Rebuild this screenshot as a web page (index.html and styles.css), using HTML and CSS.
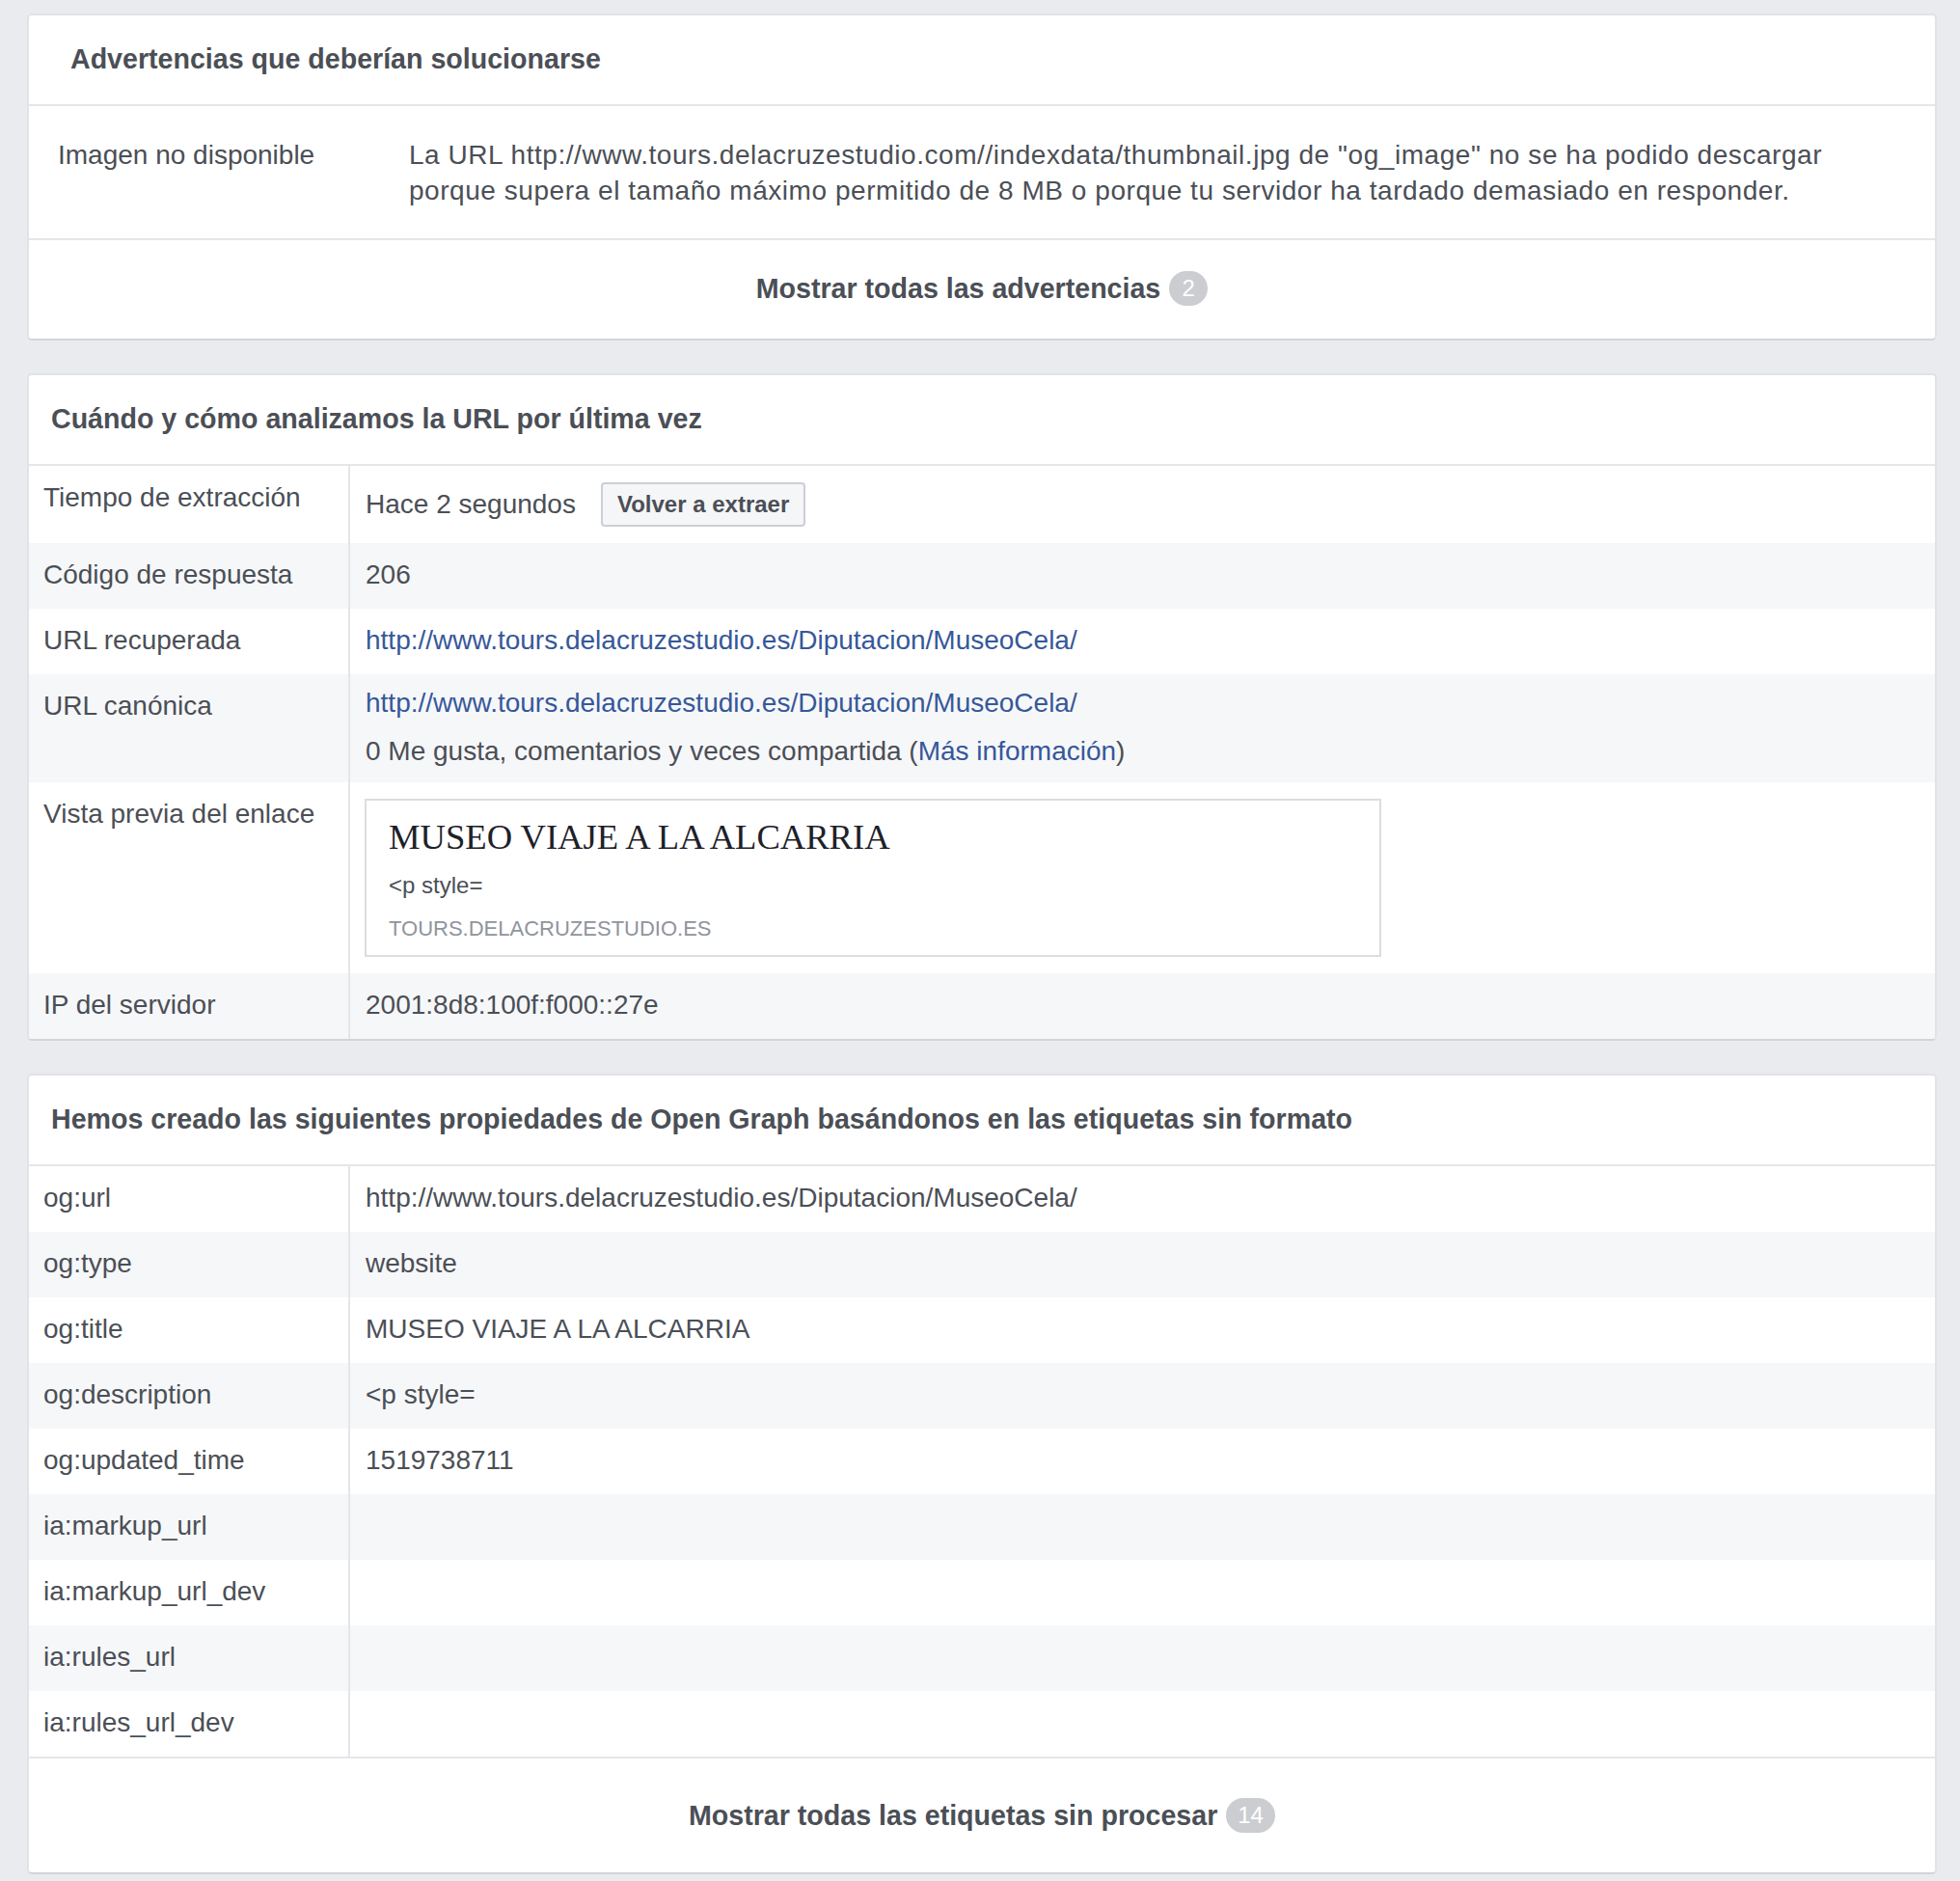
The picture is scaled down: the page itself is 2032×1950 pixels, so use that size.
FILE: index.html
```html
<!DOCTYPE html>
<html lang="es">
<head>
<meta charset="utf-8">
<title>Depurador de contenido compartido</title>
<link rel="stylesheet" href="styles.css">
</head>
<body>
<main class="page">

  <section class="card">
    <h2 class="card-head card-head-wide">Advertencias que deberían solucionarse</h2>
    <div class="warn-row">
      <div class="warn-label">Imagen no disponible</div>
      <div class="warn-text">La URL http://www.tours.delacruzestudio.com//indexdata/thumbnail.jpg de "og_image" no se ha podido descargar<br>porque supera el tamaño máximo permitido de 8 MB o porque tu servidor ha tardado demasiado en responder.</div>
    </div>
    <div class="card-foot foot-short">
      <span class="foot-text">Mostrar todas las advertencias</span><span class="badge">2</span>
    </div>
  </section>

  <section class="card">
    <h2 class="card-head">Cuándo y cómo analizamos la URL por última vez</h2>
    <div class="rows">
      <div class="row">
        <div class="cell-label">Tiempo de extracción</div>
        <div class="cell-value value-action">
          <span>Hace 2 segundos</span>
          <button class="btn" type="button">Volver a extraer</button>
        </div>
      </div>
      <div class="row alt">
        <div class="cell-label">Código de respuesta</div>
        <div class="cell-value">206</div>
      </div>
      <div class="row">
        <div class="cell-label">URL recuperada</div>
        <div class="cell-value"><a class="link" href="#">http://www.tours.delacruzestudio.es/Diputacion/MuseoCela/</a></div>
      </div>
      <div class="row alt">
        <div class="cell-label">URL canónica</div>
        <div class="cell-value value-stack">
          <div><a class="link" href="#">http://www.tours.delacruzestudio.es/Diputacion/MuseoCela/</a></div>
          <div class="stack-second">0 Me gusta, comentarios y veces compartida (<a class="link" href="#">Más información</a>)</div>
        </div>
      </div>
      <div class="row">
        <div class="cell-label">Vista previa del enlace</div>
        <div class="cell-value value-preview">
          <div class="preview">
            <div class="preview-title">MUSEO VIAJE A LA ALCARRIA</div>
            <div class="preview-desc">&lt;p style=</div>
            <div class="preview-domain">TOURS.DELACRUZESTUDIO.ES</div>
          </div>
        </div>
      </div>
      <div class="row alt">
        <div class="cell-label">IP del servidor</div>
        <div class="cell-value">2001:8d8:100f:f000::27e</div>
      </div>
    </div>
  </section>

  <section class="card">
    <h2 class="card-head">Hemos creado las siguientes propiedades de Open Graph basándonos en las etiquetas sin formato</h2>
    <div class="rows">
      <div class="row">
        <div class="cell-label">og:url</div>
        <div class="cell-value">http://www.tours.delacruzestudio.es/Diputacion/MuseoCela/</div>
      </div>
      <div class="row alt">
        <div class="cell-label">og:type</div>
        <div class="cell-value">website</div>
      </div>
      <div class="row">
        <div class="cell-label">og:title</div>
        <div class="cell-value">MUSEO VIAJE A LA ALCARRIA</div>
      </div>
      <div class="row alt">
        <div class="cell-label">og:description</div>
        <div class="cell-value">&lt;p style=</div>
      </div>
      <div class="row">
        <div class="cell-label">og:updated_time</div>
        <div class="cell-value">1519738711</div>
      </div>
      <div class="row alt">
        <div class="cell-label">ia:markup_url</div>
        <div class="cell-value"></div>
      </div>
      <div class="row">
        <div class="cell-label">ia:markup_url_dev</div>
        <div class="cell-value"></div>
      </div>
      <div class="row alt">
        <div class="cell-label">ia:rules_url</div>
        <div class="cell-value"></div>
      </div>
      <div class="row">
        <div class="cell-label">ia:rules_url_dev</div>
        <div class="cell-value"></div>
      </div>
    </div>
    <div class="card-foot foot-tall">
      <span class="foot-text">Mostrar todas las etiquetas sin procesar</span><span class="badge">14</span>
    </div>
  </section>

</main>
</body>
</html>
```

FILE: styles.css
```css
* {
  box-sizing: border-box;
}

html, body {
  margin: 0;
  padding: 0;
}

body {
  background: #e9ebee;
  font-family: "Liberation Sans", Arial, Helvetica, sans-serif;
  color: #4b4f56;
  font-size: 28px;
  line-height: 36px;
  min-height: 1950px;
}

.page {
  padding: 14px 24px 10px 28px;
  display: flex;
  flex-direction: column;
  gap: 34px;
}

.card {
  width: 1980px;
  background: #ffffff;
  border: 2px solid #e2e3e7;
  border-bottom-color: #d2d4d8;
  border-radius: 5px;
  overflow: hidden;
}

.card-head {
  margin: 0;
  padding: 27px 23px 29px;
  font-size: 28.6px;
  line-height: 36px;
  font-weight: bold;
  color: #4b4f56;
  border-bottom: 2px solid #e5e6e9;
}

.card-head-wide {
  padding-left: 43px;
}

/* warnings card */
.warn-row {
  display: grid;
  grid-template-columns: 394px 1fr;
  padding: 32px 30px 31px 0;
  line-height: 37px;
  border-bottom: 2px solid #e5e6e9;
}

.warn-label {
  padding-left: 30px;
}

.warn-text {
  white-space: nowrap;
  letter-spacing: 0.55px;
}

.card-foot {
  display: flex;
  align-items: center;
  justify-content: center;
  gap: 9px;
  font-weight: bold;
  font-size: 28.6px;
  line-height: 36px;
}

.foot-short {
  padding: 32px 0 34px;
}

.foot-tall {
  padding: 41px 0 41px;
  border-top: 2px solid #e5e6e9;
}

.badge {
  display: inline-flex;
  align-items: center;
  justify-content: center;
  height: 36px;
  min-width: 40px;
  padding: 0 12px;
  border-radius: 18px;
  background: #cbcdd1;
  color: #ffffff;
  font-weight: normal;
  font-size: 24px;
  line-height: 36px;
}

/* key / value tables */
.row {
  display: grid;
  grid-template-columns: 333px 1fr;
  background: #ffffff;
}

.row.alt {
  background: #f6f7f9;
}

.cell-label {
  padding: 15px 15px 17px;
  border-right: 2px solid #e5e6e9;
  min-height: 68px;
}

.cell-value {
  padding: 15px 16px 17px;
  min-height: 68px;
}

.value-action {
  display: flex;
  align-items: center;
  gap: 26px;
  padding-top: 17px;
  padding-bottom: 17px;
}

.btn {
  height: 46px;
  padding: 0 15px;
  border: 2px solid #ccd0d5;
  border-radius: 4px;
  background: #f5f6f7;
  color: #4b4f56;
  font-family: "Liberation Sans", Arial, Helvetica, sans-serif;
  font-size: 24px;
  font-weight: bold;
  line-height: 40px;
}

.value-stack {
  padding-top: 12px;
  padding-bottom: 14px;
}

.stack-second {
  margin-top: 14px;
}

.link {
  color: #365899;
  text-decoration: none;
}

.value-preview {
  padding: 17px 16px 17px 15px;
}

.preview {
  width: 1054px;
  border: 2px solid #dadde1;
  padding: 16px 23px 12px;
  background: #ffffff;
}

.preview-title {
  font-family: "Liberation Serif", "Times New Roman", Georgia, serif;
  font-size: 36.6px;
  line-height: 44px;
  color: #1d2129;
}

.preview-desc {
  margin-top: 12px;
  font-size: 24px;
  line-height: 32px;
  color: #4b4f56;
}

.preview-domain {
  margin-top: 14px;
  font-size: 22px;
  line-height: 30px;
  color: #90949c;
}
```
